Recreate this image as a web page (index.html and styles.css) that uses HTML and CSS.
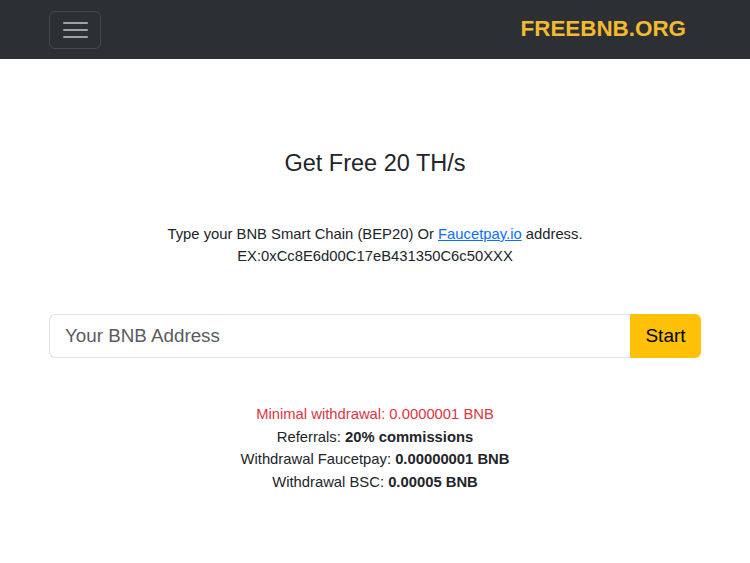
FILE: index.html
```html
<!DOCTYPE html>
<html lang="en">
<head>
<meta charset="utf-8">
<title>FREEBNB.ORG</title>
<link rel="stylesheet" href="styles.css">
</head>
<body>
<nav class="navbar">
  <button class="toggler" aria-label="menu">
    <svg width="30" height="30" viewBox="0 0 30 30"><path d="M4 8h23M4 15h23M4 22h23" stroke="rgba(255,255,255,0.55)" stroke-width="2" stroke-linecap="round"/></svg>
  </button>
  <a class="brand" href="#">FREEBNB.ORG</a>
</nav>
<main class="main">
  <h1 class="title">Get Free 20 TH/s</h1>
  <p class="intro">Type your BNB Smart Chain (BEP20) Or <a href="#">Faucetpay.io</a> address.<br>EX:0xCc8E6d00C17eB431350C6c50XXX</p>
  <form class="group">
    <input class="field" type="text" placeholder="Your BNB Address">
    <button class="start" type="button">Start</button>
  </form>
  <div class="info">
    <div class="red">Minimal withdrawal: 0.0000001 BNB</div>
    <div>Referrals: <b>20% commissions</b></div>
    <div>Withdrawal Faucetpay: <b>0.00000001 BNB</b></div>
    <div>Withdrawal BSC: <b>0.00005 BNB</b></div>
  </div>
</main>
</body>
</html>
```
FILE: styles.css
```css
* { box-sizing: border-box; }
body {
  margin: 0;
  font-family: "Liberation Sans", Arial, sans-serif;
  color: #212529;
  background: #fff;
}
.navbar {
  height: 59px;
  background: #2c3034;
  display: flex;
  align-items: center;
  justify-content: space-between;
  padding: 0 64px 0 49px;
}
.toggler {
  width: 52px;
  height: 38px;
  background: transparent;
  border: 1px solid rgba(255,255,255,0.12);
  border-radius: 6px;
  display: flex;
  align-items: center;
  justify-content: center;
  padding: 0;
}
.brand {
  color: #f3ba2f;
  font-weight: bold;
  font-size: 22.4px;
  text-decoration: none;
  margin-top: -2px;
}
.main {
  padding: 90px 49px 0;
  text-align: center;
}
.title {
  margin: 0;
  font-weight: normal;
  font-size: 23.5px;
  line-height: 28px;
}
.intro {
  margin: 46px 0 0;
  font-size: 14.8px;
  line-height: 22px;
}
.intro a { color: #0d6efd; }
.group {
  margin: 47px 0 0;
  display: flex;
  height: 44px;
}
.field {
  flex: 1;
  border: 1px solid #dee2e6;
  border-right: none;
  border-radius: 6px 0 0 6px;
  padding: 0 15px;
  font-family: inherit;
  font-size: 18.8px;
  color: #212529;
  outline: none;
}
.field::placeholder { color: #595c5f; }
.start {
  width: 71px;
  border: none;
  background: #ffc107;
  border-radius: 0 6px 6px 0;
  font-family: inherit;
  font-size: 19px;
  color: #000;
  padding: 0;
}
.info {
  margin-top: 45px;
  font-size: 14.8px;
  line-height: 22.7px;
}
.red { color: #dc3545; }
```
